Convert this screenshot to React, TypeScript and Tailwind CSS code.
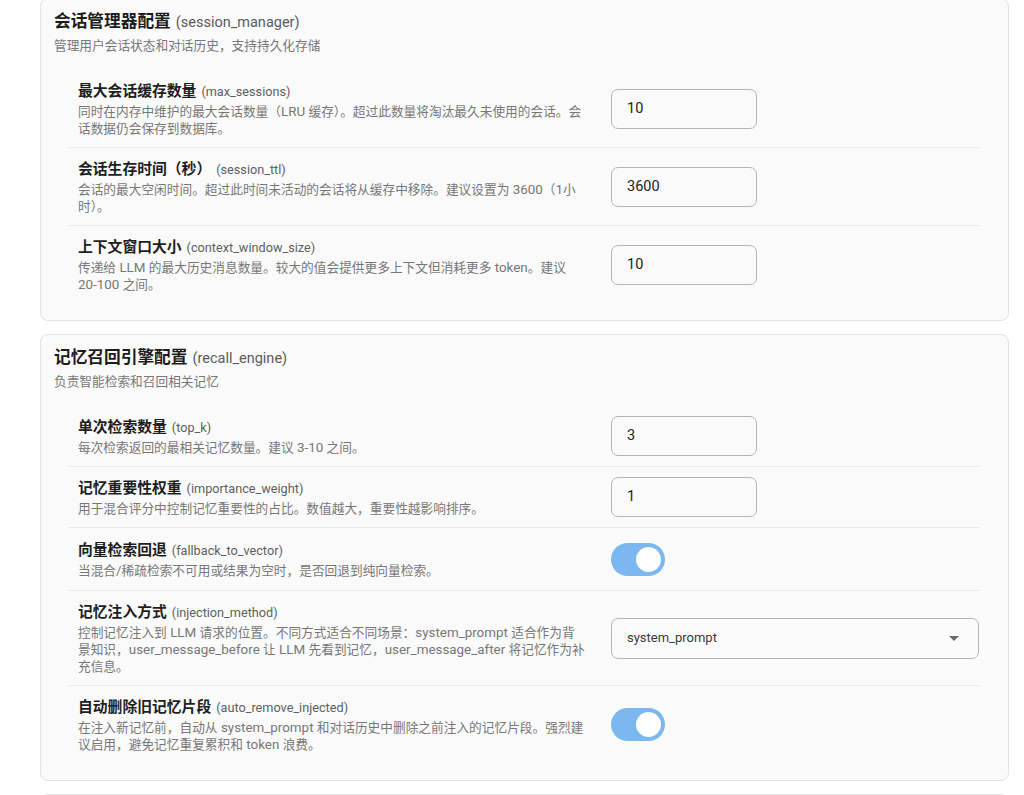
import React from "react";

type Field =
  | { kind: "input"; label: string; key: string; desc: string; value: string }
  | { kind: "switch"; label: string; key: string; desc: string; on: boolean }
  | { kind: "select"; label: string; key: string; desc: string; value: string };

type Section = { title: string; key: string; desc: string; fields: Field[] };

const sections: Section[] = [
  {
    title: "会话管理器配置",
    key: "session_manager",
    desc: "管理用户会话状态和对话历史，支持持久化存储",
    fields: [
      {
        kind: "input",
        label: "最大会话缓存数量",
        key: "max_sessions",
        desc: "同时在内存中维护的最大会话数量（LRU 缓存）。超过此数量将淘汰最久未使用的会话。会话数据仍会保存到数据库。",
        value: "10",
      },
      {
        kind: "input",
        label: "会话生存时间（秒）",
        key: "session_ttl",
        desc: "会话的最大空闲时间。超过此时间未活动的会话将从缓存中移除。建议设置为 3600（1小时）。",
        value: "3600",
      },
      {
        kind: "input",
        label: "上下文窗口大小",
        key: "context_window_size",
        desc: "传递给 LLM 的最大历史消息数量。较大的值会提供更多上下文但消耗更多 token。建议 20-100 之间。",
        value: "10",
      },
    ],
  },
  {
    title: "记忆召回引擎配置",
    key: "recall_engine",
    desc: "负责智能检索和召回相关记忆",
    fields: [
      {
        kind: "input",
        label: "单次检索数量",
        key: "top_k",
        desc: "每次检索返回的最相关记忆数量。建议 3-10 之间。",
        value: "3",
      },
      {
        kind: "input",
        label: "记忆重要性权重",
        key: "importance_weight",
        desc: "用于混合评分中控制记忆重要性的占比。数值越大，重要性越影响排序。",
        value: "1",
      },
      {
        kind: "switch",
        label: "向量检索回退",
        key: "fallback_to_vector",
        desc: "当混合/稀疏检索不可用或结果为空时，是否回退到纯向量检索。",
        on: true,
      },
      {
        kind: "select",
        label: "记忆注入方式",
        key: "injection_method",
        desc: "控制记忆注入到 LLM 请求的位置。不同方式适合不同场景：system_prompt 适合作为背景知识，user_message_before 让 LLM 先看到记忆，user_message_after 将记忆作为补充信息。",
        value: "system_prompt",
      },
      {
        kind: "switch",
        label: "自动删除旧记忆片段",
        key: "auto_remove_injected",
        desc: "在注入新记忆前，自动从 system_prompt 和对话历史中删除之前注入的记忆片段。强烈建议启用，避免记忆重复累积和 token 浪费。",
        on: true,
      },
    ],
  },
  {
    title: "记忆存储配置",
    key: "storage",
    desc: "配置记忆的持久化存储方式",
    fields: [],
  },
];

function Desc({ text }: { text: string }) {
  const parts = text.split(/([\x20-\x7E]+)/).filter((p) => p.length > 0);
  return (
    <>
      {parts.map((p, i) =>
        /^[\x20-\x7E]+$/.test(p) ? (
          <span key={i} className="text-[13.4px]">
            {p}
          </span>
        ) : (
          <span key={i}>{p}</span>
        )
      )}
    </>
  );
}

function Control({ f }: { f: Field }) {
  if (f.kind === "input") {
    return (
      <div className="flex h-[40px] w-[146px] items-center rounded-[7px] border border-[#b5b5b5] pl-[15px] text-[14.5px] text-[#222]">
        {f.value}
      </div>
    );
  }
  if (f.kind === "switch") {
    return (
      <div className="flex h-[42px] items-center">
        <div className="flex h-[33px] w-[54px] items-center justify-end rounded-full bg-[#7bb8ef] pr-[4px]">
          <div className="h-[25px] w-[25px] rounded-full bg-white" />
        </div>
      </div>
    );
  }
  return (
    <div className="flex h-[41px] w-[368px] items-center justify-between rounded-[7px] border border-[#b5b5b5] pl-[15px] pr-[12px] text-[13px] text-[#3a3a3a]">
      <span>{f.value}</span>
      <svg width="24" height="24" viewBox="0 0 24 24" className="text-[#6b6b6b]">
        <path d="M7 10l5 5 5-5z" fill="currentColor" />
      </svg>
    </div>
  );
}

function Card({ s, first }: { s: Section; first?: boolean }) {
  return (
    <div
      className={
        "rounded-[8px] border border-[#e3e3e3] bg-[#fafafa] pl-[13px] pr-[13px] pt-[12px] pb-[17px] " +
        (first ? "-mt-[2px]" : "")
      }
    >
      <div className="flex items-baseline gap-[5px] leading-[22px]">
        <span className="text-[16.7px] font-bold text-[#1c1c1c]">{s.title}</span>
        <span className="text-[14.5px] text-[#5a5a5a]">({s.key})</span>
      </div>
      <div className="mt-[3px] text-[12.7px] leading-[17px] text-[#777]">{s.desc}</div>
      {s.fields.length > 0 && (
        <div className="ml-[14px] mr-[15px] mt-[16px] divide-y divide-[#ececec]">
          {s.fields.map((f) => (
            <div key={f.key} className="flex items-center gap-[26px] py-[10px] pl-[10px] pr-[1px]">
              <div className="min-w-0 flex-1">
                <div className="flex items-baseline gap-[5px] leading-[22px]">
                  <span className="text-[14.8px] font-bold text-[#1e1e1e]">{f.label}</span>
                  <span className="text-[12.7px] text-[#5e5e5e]">({f.key})</span>
                </div>
                <div className="text-[12.7px] leading-[17px] text-[#777]">
                  <Desc text={f.desc} />
                </div>
              </div>
              <div className="w-[368px] shrink-0">
                <Control f={f} />
              </div>
            </div>
          ))}
        </div>
      )}
      {s.fields.length === 0 && <div className="h-[200px]" />}
    </div>
  );
}

export default function App() {
  return (
    <div
      className="min-h-screen bg-white pl-[40px] pr-[15px]"
      style={{ fontFamily: 'Roboto, "Noto Sans CJK SC", sans-serif' }}
    >
      <div className="flex flex-col gap-[13px]">
        {sections.map((s, i) => (
          <Card key={s.key} s={s} first={i === 0} />
        ))}
      </div>
    </div>
  );
}
